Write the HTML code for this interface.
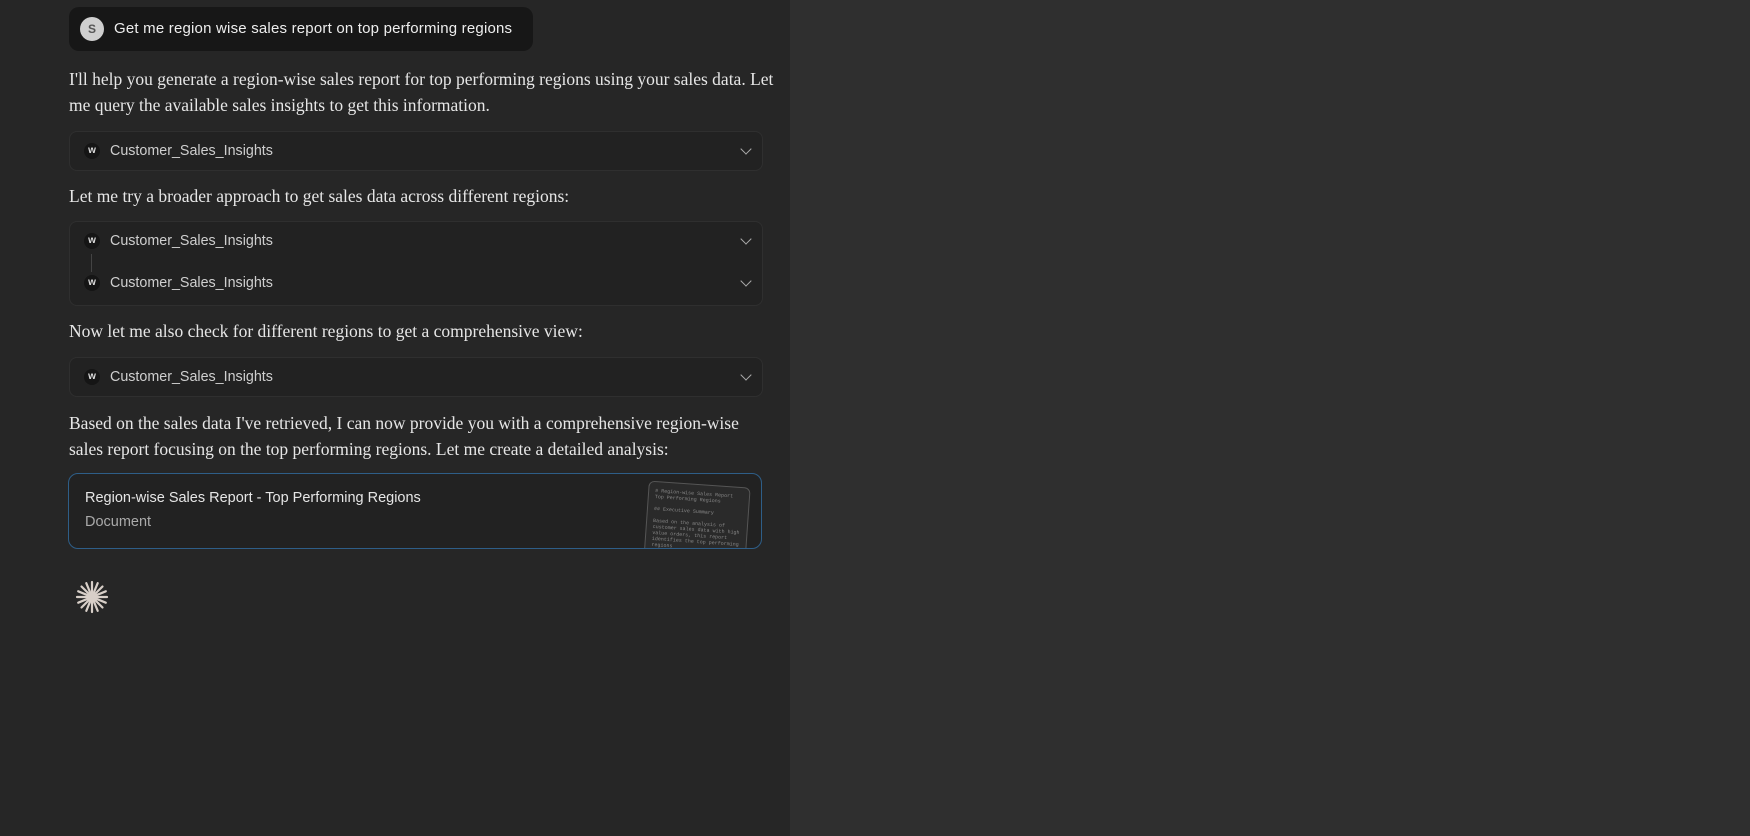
<!DOCTYPE html>
<html><head><meta charset="utf-8"><style>
*{margin:0;padding:0;box-sizing:border-box}
body{width:1750px;height:836px;background:#2f2f2f;overflow:hidden;position:relative;font-family:"Liberation Sans",sans-serif}
#left{position:absolute;left:0;top:0;width:790px;height:836px;background:#262626}
.chip{position:absolute;left:69px;top:7px;width:464px;height:44px;background:#171717;border-radius:10px}
.av{position:absolute;left:11px;top:10px;width:24px;height:24px;border-radius:50%;background:#cfcfcf;color:#555;font-size:12px;font-weight:bold;text-align:center;line-height:24px}
.chip span.t{position:absolute;left:45px;top:13px;color:#eee;font-size:15px;letter-spacing:0.2px}
.p{position:absolute;left:69px;width:700px;color:#e6e6e6;font-family:"Liberation Serif",serif;font-size:17.5px;line-height:26px}
.box{position:absolute;left:69px;width:694px;background:#222;border:1px solid #2f2f2f;border-radius:8px}
.it{position:absolute;left:14px;height:20px;color:#cfcfcf;font-size:14.3px;line-height:20px}
.it i{display:inline-block;width:16px;height:16px;border-radius:50%;background:#151515;color:#ddd;font-style:normal;font-weight:bold;font-size:10px;text-align:center;line-height:16px;margin-right:10px;vertical-align:middle}
.chev{position:absolute;right:12px;width:8px;height:8px;border-right:1.5px solid #aaa;border-bottom:1.5px solid #aaa;transform:rotate(45deg)}
.doc{position:absolute;left:68px;top:473px;width:694px;height:76px;border:1.5px solid #2e5e88;border-radius:10px;background:#222;overflow:hidden}
.thumb{position:absolute;left:577px;top:10px;width:102px;height:80px;border:1px solid #555;border-radius:6px;background:#2a2a2a;transform:rotate(4deg);font-family:"Liberation Mono",monospace;font-size:5px;color:#888;padding:6px;line-height:6px}
</style></head><body>
<div id="left">
<div class="chip"><div class="av">S</div><span class="t">Get me region wise sales report on top performing regions</span></div>
<div class="p" style="top:66px;width:730px">I'll help you generate a region-wise sales report for top performing regions using your sales data. Let me query the available sales insights to get this information.</div>
<div class="box" style="top:131px;height:40px"><div class="it" style="top:9px"><i>w</i>Customer_Sales_Insights</div><div class="chev" style="top:13px"></div></div>
<div class="p" style="top:183px">Let me try a broader approach to get sales data across different regions:</div>
<div class="box" style="top:221px;height:85px"><div class="it" style="top:9px"><i>w</i>Customer_Sales_Insights</div><div class="chev" style="top:13px"></div>
<div style="position:absolute;left:21px;top:32px;width:1px;height:18px;background:#444"></div>
<div class="it" style="top:51px"><i>w</i>Customer_Sales_Insights</div><div class="chev" style="top:55px"></div></div>
<div class="p" style="top:318px">Now let me also check for different regions to get a comprehensive view:</div>
<div class="box" style="top:357px;height:40px"><div class="it" style="top:9px"><i>w</i>Customer_Sales_Insights</div><div class="chev" style="top:13px"></div></div>
<div class="p" style="top:410px;width:690px">Based on the sales data I've retrieved, I can now provide you with a comprehensive region-wise sales report focusing on the top performing regions. Let me create a detailed analysis:</div>
<div class="doc">
<div style="position:absolute;left:16px;top:16px;color:#e6e6e6;font-size:14.5px">Region-wise Sales Report - Top Performing Regions</div>
<div style="position:absolute;left:16px;top:40px;color:#aaa;font-size:14.5px">Document</div>
<div class="thumb"># Region-wise Sales Report Top Performing Regions<br><br>## Executive Summary<br><br>Based on the analysis of customer sales data with high value orders, this report identifies the top performing regions</div>
</div>
<svg style="position:absolute;left:75px;top:580px" width="34" height="34" viewBox="-17 -17 34 34"><g stroke="#d8cfc8" stroke-width="2.2" stroke-linecap="round">
<line x1="0" y1="-15" x2="0" y2="15"/><line x1="-15" y1="0" x2="15" y2="0"/><line x1="-10.5" y1="-10.5" x2="10.5" y2="10.5"/><line x1="-10.5" y1="10.5" x2="10.5" y2="-10.5"/>
<line x1="-5.7" y1="-13.8" x2="5.7" y2="13.8"/><line x1="5.7" y1="-13.8" x2="-5.7" y2="13.8"/><line x1="-13.8" y1="-5.7" x2="13.8" y2="5.7"/><line x1="-13.8" y1="5.7" x2="13.8" y2="-5.7"/></g></svg>
</div>
</body></html>
